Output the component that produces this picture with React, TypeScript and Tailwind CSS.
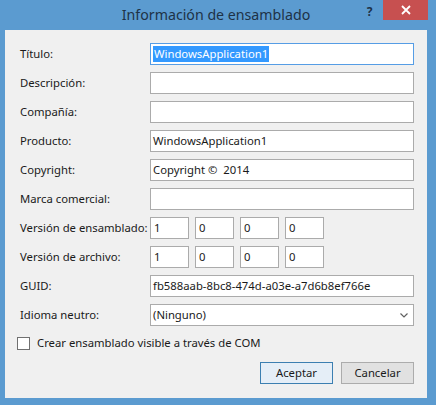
import type { ReactNode } from "react";

const font = { fontFamily: '"Noto Sans", "Open Sans", "Liberation Sans", sans-serif' };

function Row({ label, children }: { label: string; children: ReactNode }) {
  return (
    <div className="flex h-[22px] items-center">
      <div className="w-[130px] shrink-0 whitespace-nowrap text-[11.3px] text-[#1a1a1a]">{label}</div>
      {children}
    </div>
  );
}

function TextBox({ value = "", focused = false }: { value?: string; focused?: boolean }) {
  return (
    <div
      className={`flex h-[22px] w-[265px] items-center whitespace-pre border bg-white pl-[2px] text-[11.3px] text-[#1a1a1a] ${
        focused ? "border-[#569de5]" : "border-[#ababab]"
      }`}
    >
      {focused ? <span className="bg-[#3399ff] px-px text-white">{value}</span> : value}
    </div>
  );
}

function VersionBoxes({ values }: { values: string[] }) {
  return (
    <div className="flex gap-[6px]">
      {values.map((v, i) => (
        <div
          key={i}
          className="flex h-[22px] w-[39px] items-center border border-[#ababab] bg-white pl-[3px] text-[11.3px] text-[#1a1a1a]"
        >
          {v}
        </div>
      ))}
    </div>
  );
}

export default function App() {
  return (
    <div className="flex h-[405px] w-[436px] flex-col bg-[#5b9bd0]" style={font}>
      {/* title bar */}
      <div className="flex h-[30px] shrink-0">
        <div className="flex flex-1 items-center justify-center pl-[74px] pb-[1px] text-[14.2px] text-[#1e3247]">
          Información de ensamblado
        </div>
        <div className="flex h-[20px] w-[23px] items-center justify-center pt-[4px] text-[12px] font-bold text-[#1e3247]">
          ?
        </div>
        <div className="ml-[2px] mr-[8px] flex h-[20px] w-[45px] items-center justify-center bg-[#c75050]">
          <svg width="10" height="10" viewBox="0 0 10 10">
            <path d="M1 1 L9 9 M9 1 L1 9" stroke="white" strokeWidth="1.8" />
          </svg>
        </div>
      </div>

      {/* client area */}
      <div className="ml-[5px] mr-[9px] flex h-[368px] flex-col bg-[#f0f0f0] pl-[15px] pr-[13px] pt-[13px]">
        <div className="flex flex-col gap-[7px]">
          <Row label="Título:">
            <TextBox value="WindowsApplication1" focused />
          </Row>
          <Row label="Descripción:">
            <TextBox />
          </Row>
          <Row label="Compañía:">
            <TextBox />
          </Row>
          <Row label="Producto:">
            <TextBox value="WindowsApplication1" />
          </Row>
          <Row label="Copyright:">
            <TextBox value="Copyright ©  2014" />
          </Row>
          <Row label="Marca comercial:">
            <TextBox />
          </Row>
          <Row label="Versión de ensamblado:">
            <VersionBoxes values={["1", "0", "0", "0"]} />
          </Row>
          <Row label="Versión de archivo:">
            <VersionBoxes values={["1", "0", "0", "0"]} />
          </Row>
          <Row label="GUID:">
            <TextBox value="fb588aab-8bc8-474d-a03e-a7d6b8ef766e" />
          </Row>
          <Row label="Idioma neutro:">
            <div className="flex h-[22px] w-[265px] items-center justify-between border border-[#ababab] bg-white pl-[2px] pr-[5px] text-[11.3px] text-[#1a1a1a]">
              <span>(Ninguno)</span>
              <svg width="8" height="5" viewBox="0 0 8 5">
                <path d="M0.5 0.5 L4 4 L7.5 0.5" stroke="#606060" strokeWidth="1.2" fill="none" />
              </svg>
            </div>
          </Row>
        </div>

        <div className="mt-[11px] flex h-[13px] items-center gap-[7px]">
          <div className="ml-[-3px] h-[13px] w-[13px] border border-[#707070] bg-white" />
          <span className="whitespace-nowrap text-[11.3px] text-[#1a1a1a]">Crear ensamblado visible a través de COM</span>
        </div>

        <div className="mt-[12px] flex justify-end gap-[8px]">
          <button className="flex h-[22px] w-[73px] items-center justify-center border border-[#3c7fb1] bg-[#e5eef7] text-[11.3px] text-[#1a1a1a]">
            Aceptar
          </button>
          <button className="flex h-[22px] w-[73px] items-center justify-center border border-[#acacac] bg-[#e1e1e1] text-[11.3px] text-[#1a1a1a]">
            Cancelar
          </button>
        </div>
      </div>
    </div>
  );
}
